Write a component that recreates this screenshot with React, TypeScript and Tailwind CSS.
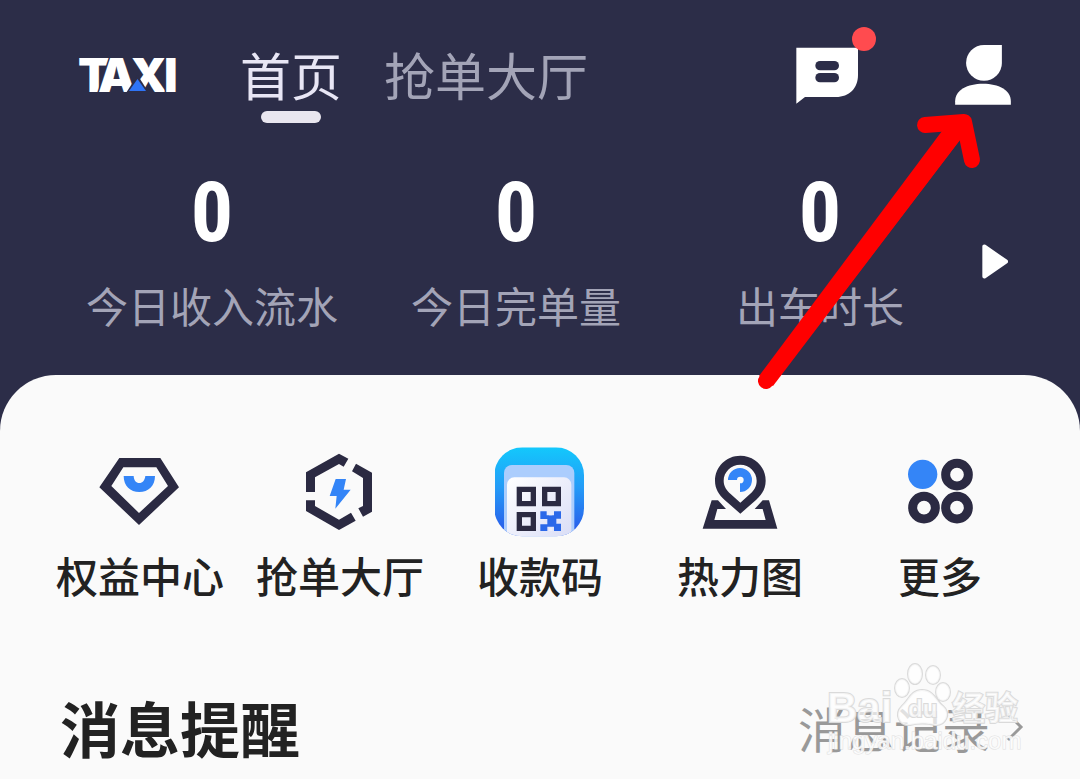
import React from 'react';

const stats = [
  { label: '今日收入流水', value: 0 },
  { label: '今日完单量', value: 0 },
  { label: '出车时长', value: 0 },
];

const TaxiLogo: React.FC = () => (
  <svg viewBox="78 46 100 60" className="w-[100px] h-[60px] overflow-visible" role="img" aria-label="TAXI">
    <g className="font-['Inter'] font-black text-[47px]" fill="#ffffff">
      <text x="78" y="93">T</text>
      <text x="98" y="93" stroke="#2c2d48" strokeWidth="3" paintOrder="stroke">A</text>
      <text x="130" y="93" stroke="#2c2d48" strokeWidth="3" paintOrder="stroke">X</text>
      <text x="164" y="93" stroke="#2c2d48" strokeWidth="3" paintOrder="stroke">I</text>
    </g>
    <path d="M137.500 76L149 94H126Z" fill="#2c2d48" />
    <path d="M137.500 80L146 92H129Z" fill="#2f74f6" />
  </svg>
);

const MessageIcon: React.FC = () => (
  <svg viewBox="48 76 192 180" className="w-16 h-[60px]" aria-hidden="true">
    <path d="M49 84H234V166C234 206 208 232 168 232H75L49 252Z" fill="#ffffff" />
    <rect x="106" y="124" width="71" height="28" rx="14" fill="#2c2d48" />
    <rect x="106" y="160" width="71" height="28" rx="14" fill="#2c2d48" />
  </svg>
);

const UserIcon: React.FC = () => (
  <svg viewBox="525 75 168 184" className="w-14 h-[61px]" aria-hidden="true">
    <path d="M612 75H666V129A54 54 0 1 1 612 75Z" fill="#ffffff" />
    <path d="M525 255V245C525 211 562 192 609 192S693 211 693 245V255Z" fill="#ffffff" />
  </svg>
);

const DiamondIcon: React.FC = () => (
  <svg viewBox="45 21 270 270" className="w-[90px] h-[90px]" aria-hidden="true">
    <path d="M118 54H241L297 142L177 255L58 142ZM130 82L94 138L177 219L264 138L229 82Z" fill="#2b2a42" fillRule="evenodd" />
    <path d="M131 108H161C162 122 168 129 178 129S194 122 196 108H225C225 138 205 156 178 156S131 138 131 108Z" fill="#3485f7" />
  </svg>
);

const GrabIcon: React.FC = () => (
  <svg viewBox="15 21 270 270" className="w-[90px] h-[90px]" aria-hidden="true">
    <g fill="#2b2a42">
      <path d="M48 156V97L147 41L175 56L161 80L147 72L75 112V156Z" />
      <path d="M198 71L246 98V215L219 230L205 205L219 198V114L186 94Z" />
      <path d="M48 181H75V198L147 239L183 218L197 242L147 270L48 213Z" />
    </g>
    <path d="M137 117H168L161 149H182L136 206L140 168H119Z" fill="#3485f7" />
  </svg>
);

const PayCodeIcon: React.FC = () => (
  <svg viewBox="45 36 270 270" className="w-[90px] h-[90px]" aria-hidden="true">
    <defs>
      <linearGradient id="payBg" x1="0" y1="0" x2="0" y2="1">
        <stop offset="0" stopColor="#13c8fc" />
        <stop offset="0.45" stopColor="#249bf7" />
        <stop offset="1" stopColor="#2a55e8" />
      </linearGradient>
      <linearGradient id="payCard" x1="0" y1="0" x2="1" y2="1">
        <stop offset="0" stopColor="#ffffff" />
        <stop offset="1" stopColor="#d8dcf6" />
      </linearGradient>
      <clipPath id="payClip">
        <rect x="43" y="37" width="269" height="267" rx="84" />
      </clipPath>
    </defs>
    <g clipPath="url(#payClip)">
      <rect x="43" y="37" width="269" height="267" fill="url(#payBg)" />
      <rect x="72" y="90" width="211" height="230" rx="24" fill="#abcdfd" />
      <rect x="81" y="127" width="193" height="200" rx="22" fill="url(#payCard)" />
    </g>
    <g fill="none" stroke="#2b2a42" strokeWidth="16">
      <path d="M118 163H160V206H118ZM194 163H235V206H194ZM118 239H160V280H118Z" />
    </g>
    <path d="M181 229H200V241H222V229H243V251H229V266H243V288H222V275H202V288H181V268H202V252H181Z" fill="#2b68e9" />
    <path d="M207 232H217V241H207ZM207 278H217V288H207Z" fill="#ecedfb" />
  </svg>
);

const HeatMapIcon: React.FC = () => (
  <svg viewBox="15 21 270 270" className="w-[90px] h-[90px]" aria-hidden="true">
    <path d="M65 181H84L108 207H82L73 240H227L218 207H194L218 181H237L262 266H38Z" fill="#2b2a42" />
    <path
      d="M151 47C193 47 227 80 227 122C227 147 215 164 198 180L151 221L104 180C87 164 75 147 75 122C75 80 109 47 151 47ZM151 74C123 74 101 96 101 122C101 139 110 151 122 162L151 188L180 162C192 151 200 139 200 122C200 96 178 74 151 74Z"
      fill="#2b2a42"
      fillRule="evenodd"
    />
    <path d="M114 120A36 36 0 1 1 150 156V130A10 10 0 1 0 141 120Z" fill="#3485f7" />
  </svg>
);

const MoreIcon: React.FC = () => (
  <svg viewBox="15 21 270 270" className="w-[90px] h-[90px]" aria-hidden="true">
    <circle cx="98" cy="103" r="44" fill="#3485f7" />
    <g fill="none" stroke="#2b2a42" strokeWidth="27">
      <circle cx="201" cy="104" r="34" />
      <circle cx="102" cy="203" r="34" />
      <circle cx="201" cy="203" r="34" />
    </g>
  </svg>
);

const menu = [
  { label: '权益中心', icon: DiamondIcon },
  { label: '抢单大厅', icon: GrabIcon },
  { label: '收款码', icon: PayCodeIcon },
  { label: '热力图', icon: HeatMapIcon },
  { label: '更多', icon: MoreIcon },
];

const Watermark: React.FC = () => (
  <svg
    viewBox="820 658 210 100"
    className="absolute right-[50px] -top-7 w-[210px] h-[100px] pointer-events-none"
    aria-hidden="true"
  >
    <g fill="#ffffff" fillOpacity="0.7" stroke="#dadada" strokeWidth="2" paintOrder="stroke">
      <text x="827" y="721" className="font-['Liberation_Sans'] font-bold text-[42px]">Bai</text>
      <ellipse cx="902" cy="687" rx="7" ry="9" />
      <ellipse cx="915" cy="673" rx="7" ry="10" />
      <ellipse cx="933" cy="674" rx="7" ry="9" />
      <ellipse cx="943" cy="691" rx="7" ry="9" />
      <path d="M922 689C934 689 936 700 943 705C952 713 945 725 935 724C926 722 918 722 910 724C899 725 894 713 902 705C909 699 911 689 922 689Z" />
      <text x="908" y="716" className="font-['Liberation_Sans'] font-bold text-[24px]">du</text>
      <text x="952" y="719" className="font-['Noto_Sans_CJK_SC'] font-bold text-[33px]">经验</text>
    </g>
    <text
      x="828"
      y="748"
      className="font-['Liberation_Sans'] text-[24px]"
      fill="#ffffff"
      fillOpacity="0.8"
      stroke="#e0e0e0"
      strokeWidth="1"
      paintOrder="stroke"
    >
      jingyan.baidu.com
    </text>
  </svg>
);

const App: React.FC = () => {
  return (
    <div className="min-h-screen flex flex-col bg-[#2c2d48] font-['Noto_Sans_CJK_SC',sans-serif] overflow-x-hidden">
      <header className="relative pt-[45px] pb-10">
        {/* Top bar */}
        <div className="flex items-start pl-[78px] pr-[69px]">
          <TaxiLogo />
          <nav className="ml-[62px] flex gap-[42px] text-[51px] leading-[58px] whitespace-nowrap">
            <button className="flex flex-col items-center gap-2 text-[#e8e6f5]">
              首页
              <span className="w-[60px] h-3 rounded-full bg-[#e9e6ef]"></span>
            </button>
            <button className="self-start text-[#a3a4b7]">抢单大厅</button>
          </nav>
          <div className="ml-auto flex items-start gap-[95px]">
            <button className="relative" aria-label="消息">
              <MessageIcon />
              <span className="absolute -right-4 -top-[18px] w-6 h-6 rounded-full bg-[#ff4b4f]"></span>
            </button>
            <button aria-label="我的">
              <UserIcon />
            </button>
          </div>
        </div>

        {/* Today numbers */}
        <div className="mt-11 pl-[60px] flex items-center">
          <dl className="flex-1 grid grid-cols-3 text-center">
            {stats.map((item) => (
              <div key={item.label} className="flex flex-col-reverse gap-4">
                <dt className="text-[42px] leading-[60px] text-[#a3a4b7] whitespace-nowrap">{item.label}</dt>
                <dd className="font-['Roboto_Condensed','Roboto',sans-serif] font-bold text-[84px] leading-[92px] text-white">{item.value}</dd>
              </div>
            ))}
          </dl>
          <button className="w-[108px] pt-5 pl-2.5" aria-label="下一页">
            <svg viewBox="846 224 78 104" className="w-[26px] h-[35px]" aria-hidden="true">
              <path d="M853 231V321L918 276Z" fill="#ffffff" stroke="#ffffff" strokeWidth="12" strokeLinejoin="round" />
            </svg>
          </button>
        </div>

        {/* Hand drawn arrow */}
        <svg
          viewBox="750 105 240 290"
          className="absolute z-10 right-[90px] top-[105px] w-60 h-[290px] pointer-events-none"
          aria-hidden="true"
        >
          <g fill="none" stroke="#ff0000" strokeLinecap="round" strokeLinejoin="round" strokeWidth="16">
            <path d="M766 381L962 124" />
            <path d="M925 125L964 122L972 160" />
          </g>
          <path d="M759 376L942 131L962 124L960 140L773 386Z" fill="#ff0000" />
        </svg>
      </header>

      <main className="flex-1 bg-[#fafafa] rounded-t-[56px] pt-[72px] pb-2">
        <div className="grid grid-cols-5 px-10">
          {menu.map(({ label, icon: Icon }) => (
            <button key={label} className="flex flex-col items-center gap-2.5 font-medium text-[42px] leading-[56px] text-[#222222] whitespace-nowrap">
              <Icon />
              {label}
            </button>
          ))}
        </div>

        {/* Messages */}
        <section className="relative mt-[84px] pl-[60px] pr-14 flex items-center justify-between">
          <h2 className="text-[60px] leading-[80px] font-bold text-[#222222]">消息提醒</h2>
          <a href="#messages" className="flex items-center gap-2.5 text-[48px] leading-[80px] text-[#999999]">
            消息记录
            <svg viewBox="0 0 24 32" className="w-6 h-8" aria-hidden="true">
              <path d="M8 3L21 16L8 29" fill="none" stroke="#999999" strokeWidth="3" />
            </svg>
          </a>
          <Watermark />
        </section>
      </main>
    </div>
  );
};

export default App;
